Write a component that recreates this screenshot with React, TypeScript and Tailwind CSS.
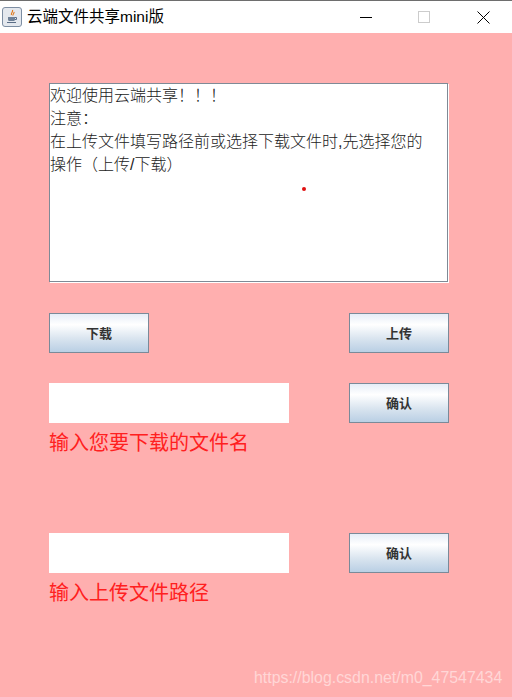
import React from 'react';

const CJK = "font-['Liberation_Sans','Noto_Sans_CJK_SC',sans-serif]";
const BTN =
  "h-10 w-[100px] border border-[#7a8a99] bg-[linear-gradient(180deg,#e6edf7_0%,#ffffff_28%,#d9e4ef_65%,#b9cfe4_100%)] pt-px text-[13px] font-bold text-[#333333]";

function JavaIcon() {
  return (
    <svg width="20" height="20" viewBox="0 0 20 20" className="shrink-0">
      <rect x="0.5" y="0.5" width="19" height="19" rx="2.5" fill="#e4e8ee" stroke="#7d8ea3" />
      <path d="M10.5 3c1 2-2 3-1 5M12 5c.5 1.500-1.500 2-1 3.500" fill="none" stroke="#e07a1f" strokeWidth="1.200" />
      <path d="M6 10h7v2.500c0 1-1 1.500-1.500 1.500h-4C7 14 6 13.500 6 12.500z" fill="#6f8198" />
      <path d="M13 10.500h1.500v2H13M5 15.500h9" fill="none" stroke="#5a6d86" />
    </svg>
  );
}

function WindowControls() {
  return (
    <div className="ml-auto flex items-center">
      <div className="flex h-8 w-[46px] items-center justify-center">
        <div className="h-px w-3 bg-black" />
      </div>
      <div className="ml-[12px] flex h-8 w-[46px] items-center justify-center">
        <div className="size-3 border border-[#cccccc]" />
      </div>
      <div className="ml-[13px] mr-[6px] flex h-8 w-[46px] items-center justify-center">
        <svg width="13" height="13" viewBox="0 0 13 13">
          <path d="M.5.500l12 12M12.500.500l-12 12" stroke="#000" fill="none" />
        </svg>
      </div>
    </div>
  );
}

function InputRow({ label, top }: { label: string; top: string }) {
  return (
    <div className={top}>
      <div className="flex items-start justify-between">
        <div className="h-10 w-[240px] bg-white" />
        <button className={BTN}>确认</button>
      </div>
      <p className="mt-[9px] text-[20px] leading-[23px] text-[#ff2020]">{label}</p>
    </div>
  );
}

export default function App() {
  return (
    <div className={`relative flex h-[697px] w-[512px] flex-col overflow-hidden bg-[#ffafaf] ${CJK}`}>
      {/* title bar */}
      <div className="flex h-[33px] items-center border-t border-t-[#6e6e6e] bg-white pl-[2px]">
        <JavaIcon />
        <span className="ml-[5px] text-[15.500px] text-black">云端文件共享mini版</span>
        <WindowControls />
      </div>

      <div className="flex w-[449px] flex-col pl-[49px] pt-[50px]">
        {/* notice box */}
        <div className="relative h-[199px] w-[399px] border border-[#7f8a96] bg-white shadow-[1px_1px_0_#ffffff] text-[16px] leading-[23px] font-light text-[#222222]">
          <p>欢迎使用云端共享！！！</p>
          <p>注意：</p>
          <p className="w-[380px]">在上传文件填写路径前或选择下载文件时,先选择您的操作（上传/下载）</p>
          <div className="absolute left-[252px] top-[103px] size-1 rounded-full bg-[#e01010]" />
        </div>

        <div className="mt-[31px] flex justify-between">
          <button className={BTN}>下载</button>
          <button className={BTN}>上传</button>
        </div>

        <InputRow label="输入您要下载的文件名" top="mt-[30px]" />
        <InputRow label="输入上传文件路径" top="mt-[78px]" />
      </div>

      {/* watermark */}
      <span className="absolute left-[254px] top-[668px] font-['Liberation_Sans',sans-serif] text-[15.900px] leading-5 text-[#ffffff]/50">
        https://blog.csdn.net/m0_47547434
      </span>
    </div>
  );
}
